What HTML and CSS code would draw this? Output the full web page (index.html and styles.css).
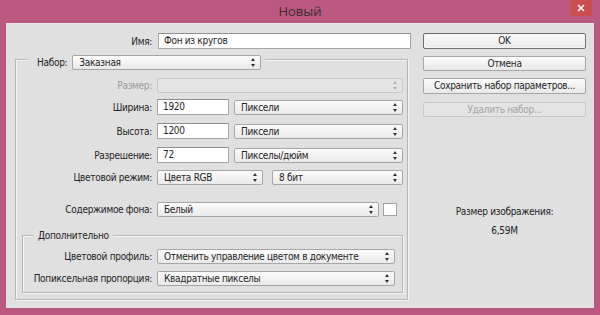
FILE: index.html
```html
<!DOCTYPE html>
<html lang="ru">
<head>
<meta charset="utf-8">
<title>Новый</title>
<link rel="stylesheet" href="styles.css">
</head>
<body>
<div class="win">
  <div class="titlebar">
    <span></span>
    <span class="title">Новый</span>
    <div class="close"><svg width="8" height="8" viewBox="0 0 8 8"><path d="M1 1L7 7M7 1L1 7" stroke="#fff" stroke-width="1.6"/></svg></div>
  </div>
  <div class="client">
    <div class="left">
      <div class="row row-name">
        <span class="lbl l0">Имя:</span>
        <div class="input w-name">Фон из кругов</div>
      </div>
      <div class="group outer">
        <div class="ghead">
          <span class="lbl-inline">Набор:</span>
          <div class="sel w-preset">Заказная</div>
        </div>
        <div class="row r-size">
          <span class="lbl l1 dis">Размер:</span>
          <div class="sel disabled w-full"></div>
        </div>
        <div class="row r-w">
          <span class="lbl l1">Ширина:</span>
          <div class="input w-num">1920</div>
          <div class="sel w-unit">Пиксели</div>
        </div>
        <div class="row r-h">
          <span class="lbl l1">Высота:</span>
          <div class="input w-num">1200</div>
          <div class="sel w-unit">Пиксели</div>
        </div>
        <div class="row r-res">
          <span class="lbl l1">Разрешение:</span>
          <div class="input w-num">72</div>
          <div class="sel w-unit">Пикселы/дюйм</div>
        </div>
        <div class="row r-mode">
          <span class="lbl l1">Цветовой режим:</span>
          <div class="sel w-mode">Цвета RGB</div>
          <div class="sel w-bits">8 бит</div>
        </div>
        <div class="row r-bg">
          <span class="lbl l1">Содержимое фона:</span>
          <div class="sel w-bg">Белый</div>
          <div class="swatch"></div>
        </div>
        <div class="group inner">
          <div class="ghead ghead-inner">Дополнительно</div>
          <div class="row r-prof">
            <span class="lbl l2">Цветовой профиль:</span>
            <div class="sel w-adv">Отменить управление цветом в документе</div>
          </div>
          <div class="row r-px">
            <span class="lbl l2">Попиксельная пропорция:</span>
            <div class="sel w-adv">Квадратные пикселы</div>
          </div>
        </div>
      </div>
    </div>
    <div class="right">
      <div class="btn default b-ok">OK</div>
      <div class="btn b-cancel">Отмена</div>
      <div class="btn b-save">Сохранить набор параметров...</div>
      <div class="btn disabled b-del">Удалить набор...</div>
      <div class="info">
        <div class="info-title">Размер изображения:</div>
        <div class="info-val">6,59M</div>
      </div>
    </div>
  </div>
</div>
</body>
</html>
```

FILE: styles.css
```css
* { box-sizing: border-box; }
html, body { margin: 0; padding: 0; }
body {
  width: 600px;
  height: 315px;
  background: #ba5880;
  font-family: "DejaVu Sans Condensed", "DejaVu Sans", sans-serif;
  font-stretch: condensed;
  font-size: 10px;
  letter-spacing: -0.3px;
  color: #242424;
  overflow: hidden;
}
.win { width: 600px; height: 315px; }

.titlebar {
  height: 23px;
  display: grid;
  grid-template-columns: 1fr auto 1fr;
  align-items: start;
}
.title {
  font-family: "Open Sans", "Noto Sans", sans-serif;
  font-stretch: normal;
  letter-spacing: 0;
  font-size: 13px;
  line-height: 23px;
  color: #3a2a30;
}
.close {
  justify-self: end;
  margin-right: 8px;
  width: 22px;
  height: 16px;
  background: #c9504f;
  display: flex;
  align-items: center;
  justify-content: center;
}

.client {
  margin: 0 6px;
  height: 285px;
  background: #e0e0e0;
  border-top: 1px solid #ececec;
  display: flex;
  padding: 8px 8px 0 9px;
  gap: 14px;
}
.left { width: 394px; display: flex; flex-direction: column; }
.right { width: 163px; display: flex; flex-direction: column; }

.row { display: flex; align-items: center; height: 16px; }
.lbl { text-align: right; padding-right: 5px; flex: none; white-space: nowrap; }
.l0 { width: 142px; }
.l1 { width: 141px; }
.l2 { width: 134px; }
.dis { color: #9c9c9c; }

.input {
  height: 16px;
  background: #fff;
  border: 1px solid #a7a7a7;
  border-top-color: #8f8f8f;
  padding: 0 5px;
  line-height: 14px;
  white-space: nowrap;
  flex: none;
}
.sel {
  position: relative;
  height: 15px;
  border: 1px solid #a6a6a6;
  border-radius: 2px;
  background: linear-gradient(#fcfcfc, #e9e9e9);
  padding: 0 16px 0 6px;
  line-height: 13px;
  white-space: nowrap;
  flex: none;
}
.sel::before, .sel::after {
  content: "";
  position: absolute;
  right: 5px;
  width: 0; height: 0;
  border-left: 2.5px solid transparent;
  border-right: 2.5px solid transparent;
}
.sel::before { top: 2px; border-bottom: 3px solid #333; }
.sel::after { top: 8px; border-top: 3px solid #333; }
.sel.disabled { background: #e4e4e4; border-color: #c8c8c8; }
.sel.disabled::before { border-bottom-color: #b0b0b0; }
.sel.disabled::after { border-top-color: #b0b0b0; }

.row-name { margin-top: 1px; }
.w-name { width: 253px; margin-left: 1px; }

.group {
  border: 1px solid #b5b5b5;
  box-shadow: inset 1px 1px 0 #f6f6f6, 1px 1px 0 #f6f6f6;
}
.outer { margin-top: 10px; width: 393px; height: 241px; }
.ghead {
  display: flex;
  align-items: center;
  width: max-content;
  background: #e0e0e0;
  padding: 0 4px 0 10px;
  margin: -5px 0 0 11px;
  height: 15px;
}
.lbl-inline { padding-right: 5px; }
.w-preset { width: 189px; }

.r-size { margin-top: 7px; }
.r-w { margin-top: 6px; }
.r-h, .r-res { margin-top: 8px; }
.r-mode { margin-top: 6px; }
.r-bg { margin-top: 16px; }

.w-full { width: 246px; }
.w-num { width: 72px; }
.w-unit { width: 169px; margin-left: 5px; }
.w-mode { width: 106px; }
.w-bits { width: 131px; margin-left: 9px; }
.w-bg { width: 222px; }
.swatch {
  width: 14px; height: 13px;
  margin-left: 4px;
  background: #fff;
  border: 1px solid #a3a3a3;
}

.inner { margin: 18px 0 0 6px; width: 381px; height: 58px; }
.ghead-inner { margin: -8px 0 0 10px; padding: 0 4px 0 5px; height: 15px; line-height: 15px; }
.r-prof { margin-top: 5px; }
.r-px { margin-top: 6px; }
.w-adv { width: 238px; }

.btn {
  height: 16px;
  border: 1px solid #a6a6a6;
  border-radius: 2px;
  background: linear-gradient(#fcfcfc, #e8e8e8);
  text-align: center;
  line-height: 14px;
  white-space: nowrap;
}
.btn.default { border-color: #6e6e6e; box-shadow: inset 0 0 0 1px #f4f4f4; }
.btn.disabled { color: #a2a2a2; background: #e4e4e4; border-color: #c8c8c8; }
.b-ok { margin-top: 1px; }
.b-cancel { margin-top: 7px; height: 15px; line-height: 13px; }
.b-save { margin-top: 7px; }
.b-del { margin-top: 8px; height: 15px; line-height: 13px; }

.info { margin-top: 87px; text-align: center; }
.info-title { line-height: 16px; }
.info-val { margin-top: 3px; line-height: 16px; }
```
